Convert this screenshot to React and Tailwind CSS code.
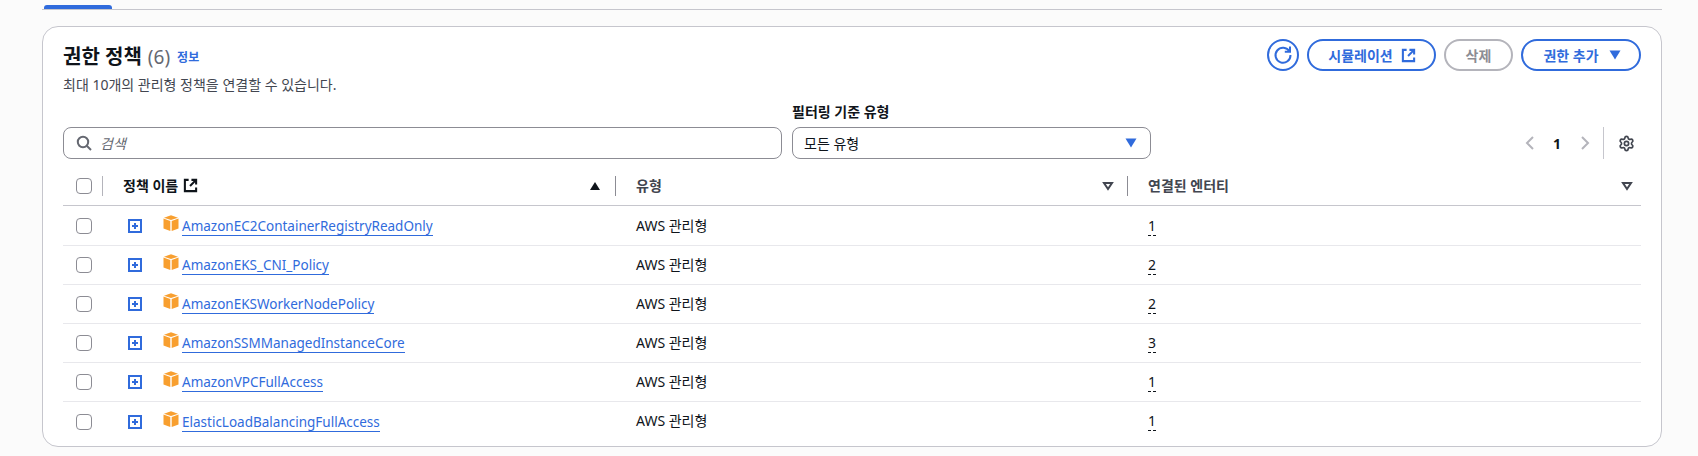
import { Settings } from "lucide-react";

const FONT = { fontFamily: '"Noto Sans", "Noto Sans CJK KR", sans-serif' };

const policies = [
  ["AmazonEC2ContainerRegistryReadOnly", "1"],
  ["AmazonEKS_CNI_Policy", "2"],
  ["AmazonEKSWorkerNodePolicy", "2"],
  ["AmazonSSMManagedInstanceCore", "3"],
  ["AmazonVPCFullAccess", "1"],
  ["ElasticLoadBalancingFullAccess", "1"],
];

function Ext({ color = "#306bdc", size = 16 }) {
  return (
    <svg width={size} height={size} viewBox="0 0 16 16" fill="none" stroke={color} strokeWidth="2.2">
      <path d="M6 2H2v12h12v-4" />
      <path d="M9 2h5v5M14 2L7.5 8.5" />
    </svg>
  );
}
function Caret({ color = "#306bdc" }) {
  return (
    <svg width="12" height="10" viewBox="0 0 12 10"><path d="M0.5 0.5h11L6 9.5z" fill={color} /></svg>
  );
}
function SortDown() {
  return (
    <svg width="12" height="10" viewBox="0 0 12 10" fill="none" stroke="#424650" strokeWidth="2"><path d="M2 2h8L6 8z" /></svg>
  );
}
function Checkbox() {
  return <div className="w-4 h-4 rounded-[4px] border border-[#8c8c94] bg-white" />;
}
function PlusBox() {
  return (
    <svg width="14" height="14" viewBox="0 0 14 14">
      <rect x="1" y="1" width="12" height="12" fill="none" stroke="#306bdc" strokeWidth="2" />
      <path d="M7 4v6M4 7h6" stroke="#306bdc" strokeWidth="2" />
    </svg>
  );
}
function Cube() {
  return (
    <svg width="16" height="16" viewBox="0 0 16 16">
      <path d="M8 0.3l7 2.4L8 5.1 1 2.7z" fill="#f89f2f" />
      <path d="M0.5 3.6l6.8 2.4V16L.5 13.6z" fill="#f89f2f" />
      <path d="M15.5 3.6L8.7 6V16l6.8-2.4z" fill="#f89f2f" />
    </svg>
  );
}
const pill = "h-8 rounded-full border-2 flex items-center justify-center text-[14px] font-bold";

export default function App() {
  return (
    <div className="w-[1698px] h-[456px] bg-[#fbfbfb] pl-[42px] overflow-hidden text-[#0f141a]" style={FONT}>
      <div className="w-[1620px] h-[10px] border-b border-[#c6c6cd] pt-[5px] pl-[2px]">
        <div className="w-[68px] h-[4px] rounded-t-[3px] bg-[#306bdc]" />
      </div>
      <div className="mt-4 w-[1620px] h-[421px] rounded-[16px] border border-[#c6c6cd] bg-white px-5 pt-3">
        <div className="flex justify-between items-start">
          <div>
            <div className="flex items-baseline h-[34px] leading-[36px]">
              <span className="text-[20px] font-bold">권한 정책</span>
              <span className="text-[19px] text-[#656871] ml-[6px]">(6)</span>
              <span className="text-[12px] font-bold text-[#306bdc] ml-[7px] relative -top-[2px]">정보</span>
            </div>
            <div className="text-[14px] leading-[20px] text-[#424650] mt-[2px]">최대 10개의 관리형 정책을 연결할 수 있습니다.</div>
          </div>
          <div className="flex gap-2">
            <div className={pill + " w-8 border-[#306bdc]"}>
              <svg width="20" height="20" viewBox="0 0 20 20" fill="none" stroke="#306bdc" strokeWidth="2">
                <path d="M16.5 6.5A7.5 7.5 0 1 0 17.5 10" />
                <path d="M17 1.5v5.2h-5.2" />
              </svg>
            </div>
            <div className={pill + " w-[129px] gap-[8px] pl-[1px] border-[#306bdc] text-[#306bdc]"}>시뮬레이션 <Ext size={15} /></div>
            <div className={pill + " w-[69px] border-[#b4b4bb] text-[#8c8c94]"}>삭제</div>
            <div className={pill + " w-[120px] gap-[10px] pl-[2px] border-[#306bdc] text-[#306bdc]"}>권한 추가 <Caret /></div>
          </div>
        </div>

        <div className="flex items-end mt-[4px] h-[60px]">
          <div className="w-[719px] h-8 rounded-[8px] border border-[#8c8c94] flex items-center pl-3 gap-2 bg-white">
            <svg width="16" height="16" viewBox="0 0 16 16" fill="none" stroke="#656871" strokeWidth="2"><circle cx="7" cy="7" r="5.2" /><path d="M11 11l4 4" /></svg>
            <span className="text-[14px] italic text-[#656871]">검색</span>
          </div>
          <div className="ml-[10px] w-[359px]">
            <div className="text-[14px] font-bold leading-[20px] mb-[5px] h-[20px]">필터링 기준 유형</div>
            <div className="h-8 rounded-[8px] border border-[#8c8c94] flex items-center justify-between pl-[11px] pr-[13px] text-[14px]">
              모든 유형 <Caret />
            </div>
          </div>
          <div className="ml-auto h-8 flex items-center w-[117px] relative">
            <svg width="12" height="16" viewBox="0 0 12 16" fill="none" stroke="#b4b4bb" strokeWidth="2"><path d="M9 2L3 8l6 6" /></svg>
            <span className="ml-[17px] text-[14px] font-bold w-[8px]">1</span>
            <svg className="ml-[18px]" width="12" height="16" viewBox="0 0 12 16" fill="none" stroke="#b4b4bb" strokeWidth="2"><path d="M3 2l6 6-6 6" /></svg>
            <div className="ml-[12px] w-px h-8 bg-[#c6c6cd]" />
            <Settings className="ml-[14px]" size={17} color="#424650" strokeWidth={2.4} />
          </div>
        </div>

        <div className="flex items-center h-[33px] mt-[14px] pb-[7px] border-b border-[#c6c6cd] text-[14px] font-bold">
          <div className="w-[49px] flex items-center pl-[13px] gap-[10px]">
            <Checkbox />
            <div className="w-[1px] h-5 bg-[#b4b4bb]" />
          </div>
          <div className="w-[524px] flex items-center pl-[11px] pr-5">
            <span>정책 이름</span>
            <span className="ml-[5px]"><Ext color="#0f141a" size={15} /></span>
            <span className="ml-auto mr-[14px]"><svg width="12" height="10" viewBox="0 0 12 10"><path d="M1 9h10L6 1z" fill="#0f141a" /></svg></span>
            <div className="w-[1px] h-5 bg-[#8c8c94]" />
          </div>
          <div className="w-[512px] flex items-center pr-5 text-[#424650]">
            <span>유형</span>
            <span className="ml-auto mr-[13px]"><SortDown /></span>
            <div className="w-[1px] h-5 bg-[#8c8c94]" />
          </div>
          <div className="flex-1 flex items-center justify-between pr-2 text-[#424650]">
            <span>연결된 엔터티</span>
            <SortDown />
          </div>
        </div>

        {policies.map(([name, n], i) => (
          <div key={name} className={"flex items-center text-[14px] " + (i === 0 ? "h-[40px] pt-[1px] " : "h-[39px] ") + (i < 5 ? "border-b border-[#e8e8ec]" : "")}>
            <div className="w-[49px] pl-[13px]"><Checkbox /></div>
            <div className="w-[524px] flex items-center">
              <span className="ml-[16px] flex"><PlusBox /></span>
              <span className="ml-[21px] flex -mt-[6px]"><Cube /></span>
              <a className="ml-[3px] text-[13.5px] text-[#306bdc] border-b border-[#306bdc] leading-[18px] pt-[1px]">{name}</a>
            </div>
            <div className="w-[512px] -mt-[2px]">AWS 관리형</div>
            <div className="flex-1 -mt-[2px]">
              <span className="border-b border-dashed border-[#0f141a] leading-[18px] inline-block pt-[2px]">{n}</span>
            </div>
          </div>
        ))}
      </div>
    </div>
  );
}
